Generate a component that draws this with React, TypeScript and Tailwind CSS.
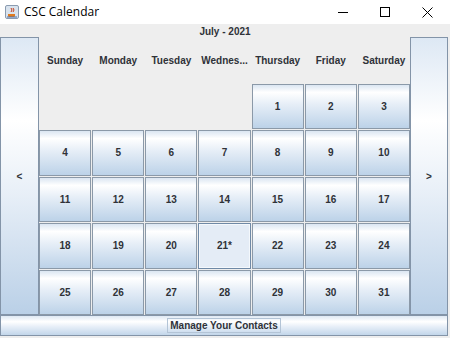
import React from "react";

const days = ["Sunday", "Monday", "Tuesday", "Wednes...", "Thursday", "Friday", "Saturday"];

const cells: (string | null)[] = [
  null, null, null, null, "1", "2", "3",
  "4", "5", "6", "7", "8", "9", "10",
  "11", "12", "13", "14", "15", "16", "17",
  "18", "19", "20", "21*", "22", "23", "24",
  "25", "26", "27", "28", "29", "30", "31",
];

const btnGrad =
  "bg-[linear-gradient(to_bottom,#dbe6f2_0%,#ffffff_17%,#e6eef7_45%,#bcd2e8_100%)]";
const sideGrad =
  "bg-[linear-gradient(to_bottom,#dde8f4_0%,#ffffff_30%,#e9f0f8_55%,#bad0e7_100%)]";

const App = () => {
  return (
    <div className="w-[450px] h-[338px] bg-white overflow-hidden font-['Liberation_Sans',Arial,sans-serif] text-[#2f3238]">
      {/* Window title bar */}
      <div className="h-6 flex items-center bg-white">
        <svg width="14" height="14" viewBox="0 0 14 14" className="ml-[5px]">
          <rect x="0.5" y="0.5" width="13" height="13" rx="1.5" fill="#d9e3ee" stroke="#8a9bb0" />
          <path d="M3 9 h7 v1.5 a1.5 1.5 0 0 1 -1.5 1.5 h-4 a1.5 1.5 0 0 1 -1.5 -1.5 z" fill="#e07b1f" />
          <path d="M6 3 q2 2 0 4 M8 3 q2 2 0 4" stroke="#c9401a" strokeWidth="1" fill="none" />
          <rect x="2" y="11.5" width="10" height="1" fill="#4a6fa5" />
        </svg>
        <span className="ml-[5px] text-[12px] text-black font-['Open_Sans',sans-serif]">CSC Calendar</span>
        <div className="ml-auto flex items-center h-full">
          <div className="w-[46px] h-full flex items-center justify-center">
            <div className="w-[10px] h-px bg-black" />
          </div>
          <div className="w-[38px] h-full flex items-center justify-center">
            <div className="w-[10px] h-[10px] border border-black" />
          </div>
          <div className="w-[46px] h-full flex items-center justify-center">
            <svg width="11" height="11" viewBox="0 0 11 11">
              <path d="M0.5 0.5 L10.5 10.5 M10.5 0.5 L0.5 10.5" stroke="#000" strokeWidth="1" />
            </svg>
          </div>
        </div>
      </div>

      {/* Content */}
      <div className="h-[314px] bg-[#eeeeee] flex flex-col">
        <div className="h-[13px] flex items-center justify-center text-[10px] font-bold pt-[1px]">
          July - 2021
        </div>
        <div className="h-[278px] flex w-[448px]">
          <button className={`w-[39px] h-full border border-[#8394a8] ${sideGrad} flex items-center justify-center text-[10px] font-bold`}>
            &lt;
          </button>
          <div className="w-[371px] grid grid-cols-7 grid-rows-6 gap-px">
            {days.map((d) => (
              <div key={d} className="flex items-center justify-center text-[10px] font-bold whitespace-nowrap pt-[2px]">
                {d}
              </div>
            ))}
            {cells.map((c, i) =>
              c === null ? (
                <div key={i} />
              ) : c === "21*" ? (
                <div
                  key={i}
                  className="border border-[#6f89a6] bg-[#e4ecf6] shadow-[inset_0_0_0_1px_#f4f8fc] flex items-center justify-center text-[10px] font-bold"
                >
                  {c}
                </div>
              ) : (
                <div
                  key={i}
                  className={`border border-[#8b99a8] ${btnGrad} flex items-center justify-center text-[10px] font-bold`}
                >
                  {c}
                </div>
              )
            )}
          </div>
          <button className={`w-[38px] h-full border border-[#8394a8] ${sideGrad} flex items-center justify-center text-[10px] font-bold`}>
            &gt;
          </button>
        </div>
        <button className="w-[448px] h-[21px] border border-[#8394a8] bg-[linear-gradient(to_bottom,#dfe9f4_0%,#ffffff_30%,#e8eff8_55%,#c2d6ea_100%)] flex items-center justify-center">
          <span className="text-[10px] font-bold px-[2px] leading-[13px] border border-[#b3c4d6]">
            Manage Your Contacts
          </span>
        </button>
      </div>
    </div>
  );
};

export default App;
